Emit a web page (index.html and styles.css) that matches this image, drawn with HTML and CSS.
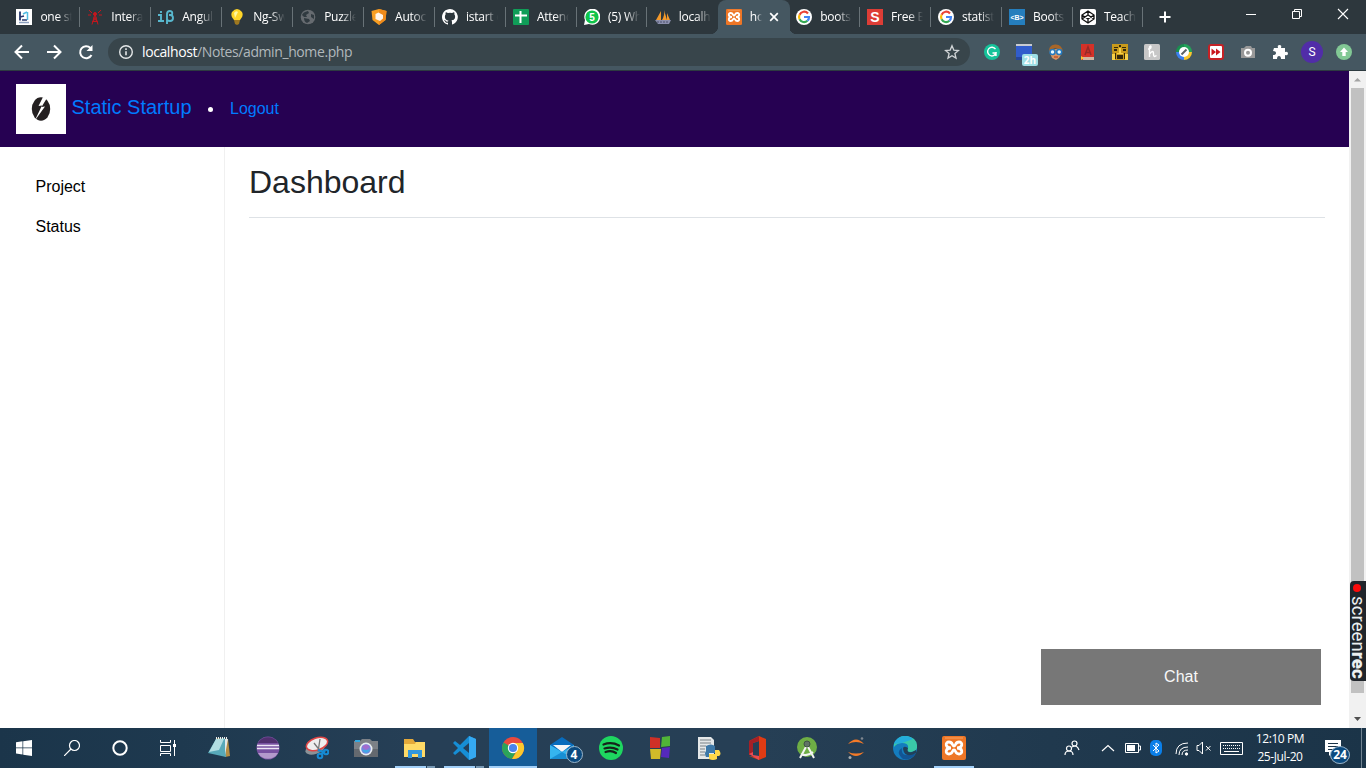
FILE: index.html
```html
<!DOCTYPE html>
<html lang="en">
<head>
<meta charset="utf-8">
<title>home</title>
<link rel="stylesheet" href="styles.css">
</head>
<body>
<svg class="defs" width="0" height="0">
  <defs>
    <symbol id="google" viewBox="0 0 16 16"><circle cx="8" cy="8" r="8" fill="#fff"/><g fill="none" stroke-width="2.2"><path d="M12 4.5A5 5 0 0 0 3.6 5.7" stroke="#ea4335"/><path d="M3.6 5.7A5 5 0 0 0 3.6 10.3" stroke="#fbbc05"/><path d="M3.6 10.3A5 5 0 0 0 11.4 11.8" stroke="#34a853"/><path d="M11.4 11.8A5 5 0 0 0 13 8H8" stroke="#4285f4"/></g></symbol>
    <symbol id="xampp" viewBox="0 0 24 24"><rect width="24" height="24" rx="2" fill="#ee7626"/><path d="M3 2h18" stroke="#f6a365"/><path d="M9 12C3 12 3 6 7 6c4 0 3 4 5 4s1-4 5-4 4 6-2 6c6 0 6 6 2 6s-3-4-5-4-1 4-5 4-4-6 2-6z" fill="none" stroke="#fff" stroke-width="2.8"/></symbol>
  </defs>
</svg>

<div class="screen">
  <div class="tabstrip">
    <div class="tabs">
      <div class="tab"><svg viewBox="0 0 16 16"><path fill="#fff" d="M0 0h16v16H0z"/><path d="M4 2.500v9M4 8l4-1" stroke="#26376d" stroke-width="1.800" fill="none"/><path d="M6 11h5" stroke="#26376d" stroke-width="1.500"/><path d="M7 5l4-2M11.500 3v8" stroke="#51bde2" stroke-width="1.500" fill="none"/><path d="M3 13.500h10" stroke="#8ca0bf" stroke-width="1.500"/></svg><span class="title">one st</span></div>
      <div class="tab"><svg viewBox="0 0 16 16" fill="none" stroke="#c5161d"><path d="M8 5l-3 10.500M8 5l3 10.500M6.500 9h3M5.500 12.500h5M6.500 9l4 3.500M9.500 9l-4 3.500"/><path d="M5 4L2 1M4 6H1M11 4l3-3M12 6h3"/><circle cx="8" cy="5" r="1.500" fill="#c5161d"/></svg><span class="title">Intera</span></div>
      <div class="tab"><svg viewBox="0 0 16 16" fill="none" stroke="#58b8ce" stroke-width="1.900"><path d="M0 6h3v6M0 12h6M3 2v2M9 15V5q0-3 3-3t2 4h-3 1q3 0 3 3t-3 3q-3 0-3-2"/></svg><span class="title">Angul</span></div>
      <div class="tab"><svg viewBox="0 0 16 16"><path d="M5 11Q1 7 3 3q5-6 10 0 2 4-2 8z" fill="#ffd629"/><path d="M5 4q2-3 4-1L6 9z" fill="#fff8a0"/><path d="M5 11h6l-1 4-2 1-2-1z" fill="#9e7820"/></svg><span class="title">Ng-Sw</span></div>
      <div class="tab"><svg viewBox="0 0 16 16"><circle cx="8" cy="8" r="7.300" fill="#666b70"/><path d="M8 2l1 2-3 2 1 2H4L2 6q1-3 6-4zM4 9l5 1 1 2-3 2q-3-1-3-5zM11 5l3 1v4l-3-2z" fill="#303a40"/></svg><span class="title">Puzzle</span></div>
      <div class="tab"><svg viewBox="0 0 16 16"><path d="M.5 2L8 0l7.500 2-1 9L8 16l-6.500-5z" fill="#f89e21"/><path d="M8 0l7.500 2-1 9L8 16z" fill="#ef8b1b"/><path d="M4.500 5l3-1.500L12 6v3.500L9 12l-4.500-2z" fill="#fff4e8"/></svg><span class="title">Autoc</span></div>
      <div class="tab"><svg viewBox="0 0 16 16"><path fill="#fff" d="M8 0C3.6 0 0 3.6 0 8c0 3.5 2.3 6.500 5.500 7.600.4.100.5-.2.5-.4v-1.500c-2.200.5-2.700-1-2.700-1-.4-.9-.9-1.200-.9-1.200-.7-.5.100-.5.100-.5.8.100 1.200.8 1.200.8.7 1.200 1.900.9 2.300.7.100-.5.3-.9.5-1.100-1.800-.2-3.600-.9-3.600-4 0-.9.300-1.600.8-2.100-.100-.2-.4-1 .1-2.100 0 0 .7-.2 2.200.8a7.600 7.600 0 0 1 4 0c1.500-1 2.200-.8 2.200-.8.4 1.100.2 1.900.1 2.100.5.600.8 1.300.8 2.200 0 3.100-1.900 3.700-3.700 3.900.3.300.6.800.6 1.500v2.200c0 .2.100.5.600.4A8 8 0 0 0 8 0z"/></svg><span class="title">istart o</span></div>
      <div class="tab"><svg viewBox="0 0 16 16"><rect width="16" height="16" rx="1" fill="#109d58"/><path d="M2 6.500h12M7.500 2v12" stroke="#fff" stroke-width="2"/></svg><span class="title">Attend</span></div>
      <div class="tab"><svg viewBox="0 0 16 16"><path d="M0 16l1-5A8 8 0 1 1 5 15z" fill="#fff"/><circle cx="8" cy="8" r="6.600" fill="#10c44b"/><text x="8" y="11.800" class="glyph-five">5</text></svg><span class="title">(5) Wh</span></div>
      <div class="tab"><svg viewBox="0 0 16 16"><path d="M1 11L6 2v9zM7 11q3-5 2-10l3 10zM12 11V4l3 7z" fill="#f3992b"/><path d="M0 11h16l-2 4H3z" fill="#8b8fac"/><path d="M2 13h12" stroke="#4b506d" stroke-dasharray="2 1"/></svg><span class="title">localh</span></div>
      <div class="tab active"><svg><use href="#xampp"/></svg><span class="title">ho</span><svg class="close" viewBox="0 0 10 10"><path d="M1.200 1.200l7.600 7.600M8.800 1.200L1.200 8.800" stroke="#fff" stroke-width="1.700"/></svg></div>
      <div class="tab"><svg><use href="#google"/></svg><span class="title">boots</span></div>
      <div class="tab"><svg viewBox="0 0 16 16"><path fill="#dd3d36" d="M0 0h16v16H0z"/><text x="8" y="13" class="glyph-s">S</text></svg><span class="title">Free B</span></div>
      <div class="tab"><svg><use href="#google"/></svg><span class="title">statist</span></div>
      <div class="tab"><svg viewBox="0 0 16 16"><path fill="#257ebd" d="M0 0h16v16H0z"/><text x="8" y="10.500" class="glyph-b">&lt;B&gt;</text></svg><span class="title">Boots</span></div>
      <div class="tab"><svg viewBox="0 0 16 16"><rect width="16" height="16" rx="2" fill="#fff"/><path d="M8 2l6 4v4l-6 4-6-4V6zM2 6l6 4 6-4M2 10l6-4 6 4M8 2v4M8 10v4" fill="none" stroke="#111" stroke-width="1.300"/></svg><span class="title">Teach</span></div>
    </div>
    <svg class="newtab" viewBox="0 0 12 12"><path d="M6 .5v11M.5 6h11" stroke="#fff" stroke-width="2"/></svg>
    <div class="window-controls">
      <svg viewBox="0 0 12 12"><path d="M1 6.500h10" stroke="#fff"/></svg>
      <svg viewBox="0 0 12 12" fill="none" stroke="#fff"><path d="M1.500 3.500h7v7h-7zM3.500 3V1.500h7v7H9"/></svg>
      <svg viewBox="0 0 12 12"><path d="M1 1l10 10M11 1L1 11" stroke="#fff" stroke-width="1.100"/></svg>
    </div>
  </div>

  <div class="toolbar">
    <div class="nav">
      <svg viewBox="0 0 16 16"><path d="M15 8H2M8 1.500L1.500 8 8 14.500"/></svg>
      <svg viewBox="0 0 16 16"><path d="M1 8h13M8 1.500L14.500 8 8 14.500"/></svg>
      <svg viewBox="0 0 16 16"><path d="M13.500 11A6 6 0 1 1 12.400 4"/><path d="M14.500 1v6h-6z" class="solid"/></svg>
    </div>
    <div class="omnibox">
      <svg class="info" viewBox="0 0 16 16"><circle cx="8" cy="8" r="6.300" fill="none" stroke="#e4e7e8" stroke-width="1.400"/><path d="M8 7.200v4M8 4.300v1.600" stroke="#e4e7e8" stroke-width="1.600"/></svg>
      <span class="url"><b>localhost</b>/Notes/admin_home.php</span>
      <svg class="star" viewBox="0 0 16 16"><path d="M8 1.800l1.800 4.300 4.700.4-3.600 3 1.100 4.600L8 11.700l-4 2.400 1.100-4.600-3.600-3 4.700-.4z" fill="none" stroke="#d0d4d6" stroke-width="1.300"/></svg>
    </div>
    <div class="extensions">
      <svg viewBox="0 0 16 16"><circle cx="8" cy="8" r="8" fill="#15c39a"/><path d="M11.500 5.200A4.300 4.300 0 1 0 12 9H8.500M12 8v4" fill="none" stroke="#fff" stroke-width="1.400"/></svg>
      <div class="ext"><svg viewBox="0 0 16 16"><path d="M0 1h16v15H0z" fill="#315dcc"/><path d="M0 0h16v2H0z" fill="#c8cbd0"/><path d="M0 13h16v3H0z" fill="#274799"/></svg><span class="timer">2h</span></div>
      <svg viewBox="0 0 16 16"><path d="M2.500 6L13 4l1 5-3 5-3 2-4-2-2-5z" fill="#d79463"/><path d="M1 9Q0 1 7 .5q7-.5 8 7.500l-2-3-6-1-4 2z" fill="#a86628"/><circle cx="4.500" cy="8" r="2.500" fill="#e9faff" stroke="#237ac0" stroke-width="1.500"/><circle cx="11.200" cy="8" r="2.500" fill="#e9faff" stroke="#237ac0" stroke-width="1.500"/><path d="M6 13h4" stroke="#bd4e28" stroke-width="1.300"/></svg>
      <svg viewBox="0 0 16 16"><path d="M1 0h13v13L12 16H1z" fill="#d53128"/><path d="M2 13h12v3H3z" fill="#d0b5a2"/><path d="M5 11l3-8 3 8M6 8.500h4" fill="none" stroke="#962a28" stroke-width="1.500"/><path d="M1 12l3 2-3 2z" fill="#ffc52d"/></svg>
      <svg viewBox="0 0 16 16"><path d="M0 0h16v6l-1 10H1L0 6z" fill="#c99a1b"/><path d="M2 3h4v1H2zM10 3h4v1h-4zM2 5h3v2H2zM11 5h3v2h-3zM5 11h6v4H5zM3 9h1v6H3zM12 9h1v6h-1zM7 1h2v2H7z" fill="#32280c"/><path d="M7 4h2v5H7zM0 10h3v6H0zM13 10h3v6h-3zM5 9h6v1H5z" fill="#f7d047"/></svg>
      <svg viewBox="0 0 16 16"><rect width="16" height="16" rx="1.500" fill="#c7c7c7"/><path d="M4 5q3 0 3-2t-1.500 0V13M5.500 10q4-5 4 0 0 4 3 1.500" fill="none" stroke="#fff" stroke-width="1.400"/></svg>
      <svg viewBox="0 0 16 16"><path d="M8 0a8 8 0 0 1 8 8H8z" fill="#24a35a"/><path d="M0 8a8 8 0 0 1 8-8v8z" fill="#198f4f"/><path d="M0 8h8v8a8 8 0 0 1-8-8z" fill="#3b80ee"/><path d="M16 8a8 8 0 0 1-8 8V8z" fill="#f7c72c"/><circle cx="8" cy="8" r="5" fill="#fff"/><path d="M5.500 10.500l5-5" stroke="#5b6265" stroke-width="2"/></svg>
      <svg viewBox="0 0 16 16"><rect x="1" y="1" width="14" height="14" rx="2" fill="#fff" stroke="#c52125" stroke-width="2"/><path d="M3.500 4.500L8 8l-4.500 3.500zM8 4.500L12.500 8 8 11.500z" fill="#ca171d"/></svg>
      <svg viewBox="0 0 16 16"><path d="M1 4h3l2-2h5l1 2h3v10H1z" fill="#999"/><circle cx="8" cy="8.700" r="3" fill="none" stroke="#fff" stroke-width="2"/></svg>
      <svg viewBox="0 0 16 16"><path d="M2 4h4q-1-3 1.500-3T9 4h4v4q3-1 3 1.500T13 11v4H9q0-3-2-3t-2 3H1v-4q3 0 3-2T1 7z" fill="#fff"/></svg>
      <span class="avatar">S</span>
      <svg viewBox="0 0 16 16"><circle cx="8" cy="8" r="8" fill="#82c895"/><path d="M8 3.500l4 4.500H9.700v4H6.300V8H4z" fill="#fff"/></svg>
    </div>
  </div>

  <div class="viewport">
    <div class="page">
      <header class="site-header">
        <svg class="logo" viewBox="0 0 50 50"><path fill="#fff" d="M0 0h50v50H0z"/><ellipse cx="25" cy="25" rx="9.200" ry="11.700" fill="#231f20"/><path d="M27 13l-4.500 9 3.500-.500L20 34l-1.500 3L29 22.500l-3.500.5L31 14z" fill="#fff"/></svg>
        <a class="brand">Static Startup</a>
        <i class="bullet"></i>
        <a class="logout">Logout</a>
      </header>
      <div class="content">
        <nav class="sidebar"><a>Project</a><a>Status</a></nav>
        <main><h1>Dashboard</h1></main>
      </div>
      <button class="chat">Chat</button>
    </div>
    <div class="scrollbar">
      <svg viewBox="0 0 17 17"><path d="M5 10.500L8.500 7l3.500 3.500z" fill="#a3a3a3"/></svg>
      <div class="thumb"></div>
      <svg class="down" viewBox="0 0 17 17"><path d="M5 6l3.500 4L12 6z" fill="#505050"/></svg>
      <div class="recorder"><i></i><span>screen<b>rec</b></span></div>
    </div>
  </div>

  <footer class="taskbar">
    <div class="system">
      <div><svg class="small" viewBox="0 0 16 16" fill="#fff"><path d="M0 2.200L6.500 1.300v6.200H0zM7.200 1.200L16 0v7.500H7.200zM0 8.200h6.500v6.300L0 13.600zM7.200 8.200H16V16l-8.800-1.300z"/></svg></div>
      <div><svg class="small" viewBox="0 0 16 16" fill="none" stroke="#fff" stroke-width="1.200"><circle cx="10.500" cy="5.500" r="5"/><path d="M7 9L0 16"/></svg></div>
      <div><svg class="small" viewBox="0 0 16 16"><circle cx="8" cy="8" r="6.700" fill="none" stroke="#fff" stroke-width="2"/></svg></div>
      <div><svg class="small" viewBox="0 0 16 16" fill="none" stroke="#fff"><path d="M.5 0v2.500h10V0M.5 5.500h10v6H.5zM.5 16v-2.500h10V16M14.500 0v16"/><path d="M13 4h3v3h-3z" fill="#fff" stroke="none"/></svg></div>
    </div>
    <div class="apps">
      <div><svg viewBox="0 0 24 24"><path d="M10 2l11 1 2 17-5 1z" fill="#b48d44"/><path d="M9 3l9-1 1 19L1 17z" fill="#57a9b9"/><path d="M9 3h8l-5 11L2 16z" fill="#b2dde2"/><path d="M9 2h12" stroke="#eee" stroke-width="2" stroke-dasharray="1 1"/><path d="M18 3h3l-3 16z" fill="#e2e8e8"/></svg></div>
      <div><svg viewBox="0 0 24 24"><circle cx="12" cy="12" r="11.500" fill="#7751a0"/><path d="M2 7a11.500 11.500 0 0 1 20 0z" fill="#51306f"/><path d="M2 17h20a11.500 11.500 0 0 1-20 0z" fill="#b39acb"/><path d="M1 9.500h22M1 12.500h22" stroke="#eee6f5" stroke-width="1.300"/></svg></div>
      <div><svg viewBox="0 0 24 24"><ellipse cx="10" cy="13" rx="10" ry="5" fill="#8c9297" transform="rotate(-18 10 13)"/><ellipse cx="12" cy="8" rx="11" ry="6" fill="#eee" stroke="#df4545" stroke-width="1.500" transform="rotate(-18 12 8)"/><path d="M9 7l7 9M15 3l-2 13" stroke="#777" stroke-width="1.300"/><g fill="none" stroke="#168bd4" stroke-width="2"><circle cx="15" cy="20" r="2.300"/><circle cx="21" cy="16" r="2.300"/><path d="M13 14l6 2-3 2"/></g></svg></div>
      <div><svg viewBox="0 0 24 24"><path d="M0 5h6l2-2h8l2 2h6v16H0z" fill="#7c8187"/><path d="M1 4h5v2H1z" fill="#32a7df"/><path d="M0 13h24v8H0z" fill="#64696f"/><circle cx="12" cy="13" r="6.500" fill="#e7edf1"/><circle cx="12" cy="13" r="4.800" fill="#7386dc"/><path d="M8 11q4-5 8 0l-4 3z" fill="#a36cce"/><path d="M8 14q4 6 8 0z" fill="#41a8e7"/></svg></div>
      <div class="running split"><svg viewBox="0 0 24 24"><path d="M1 3h9l2 3h10v15H1z" fill="#e4a93a"/><path d="M1 8h11l1-2h9v15H1z" fill="#ffda66"/><path d="M5 14h14v8h-4v-4H9v4H5z" fill="#3297dc"/></svg></div>
      <div class="running split"><svg viewBox="0 0 24 24"><path d="M17 0l7 3v18l-7 3-9-9-5 4-2-2 5-5-5-5 2-2 5 4z" fill="#168ed5"/><path d="M17 7v10l-6-5z" fill="#23405b"/><path d="M17 0l7 3v18l-7 3z" fill="#35a9f2"/></svg></div>
      <div class="running selected"><svg viewBox="0 0 24 24"><circle cx="12" cy="12" r="11" fill="#e9493d"/><path d="M2.500 6.500A11 11 0 0 0 11 23l5-9-4-2z" fill="#2ba45a"/><path d="M12 7h9.800A11 11 0 0 1 11 23l5.500-9z" fill="#fbc82d"/><circle cx="12" cy="12" r="5.200" fill="#fff"/><circle cx="12" cy="12" r="4.100" fill="#4a84ec"/></svg></div>
      <div class="mail"><svg viewBox="0 0 24 24"><path d="M0 9l12-8 12 8v14H0z" fill="#086cbd"/><path d="M3 9h18l-9 7z" fill="#f4f6f8"/><path d="M0 9l12 7 12-7v14H0z" fill="#35b5ef"/><path d="M0 23l12-7 12 7z" fill="#188fd4"/></svg><span class="badge">4</span></div>
      <div><svg viewBox="0 0 24 24"><circle cx="12" cy="12" r="12" fill="#1ed760"/><path d="M4.500 8.500q8-3 15.500 1M5.500 12.500q7-2 13 1M6.500 16q6-2 10.500 1" fill="none" stroke="#15231b" stroke-width="2.200" stroke-linecap="round"/></svg></div>
      <div><svg viewBox="0 0 24 24"><path d="M2 1l10 1v10H2z" fill="#ce3027"/><path d="M14 1l8-1v10l-9 1z" fill="#50b538"/><path d="M2 13h11l-1 10H3z" fill="#d0ba29"/><path d="M14 12l8-1-1 11-8-1z" fill="#5529bb"/></svg></div>
      <div><svg viewBox="0 0 24 24"><path d="M1 1h13l3 3v19H1z" fill="#e5e8e9"/><path d="M3 4h11M3 7h11M3 10h6M3 13h5M3 16h5M3 19h5" stroke="#788187"/><path d="M9 15v-5q5-3 9 0v7h-6v4H9q-2-4 0-6z" fill="#3d78a8"/><path d="M18 14h4q3 4 0 6h-2v3q-4 2-8 0v-5h6z" fill="#ffd849"/></svg></div>
      <div><svg viewBox="0 0 24 24"><path d="M3 5l10-5 7 3v18l-7 3-10-4 10 1V5L7 7v10l-4 2z" fill="#df3b14"/><path d="M3 5l10-5v5L7 7v10l-4 2z" fill="#a52026"/><path d="M3 18l4-2v3l6 1v4z" fill="#e84b53"/></svg></div>
      <div><svg viewBox="0 0 24 24"><circle cx="12" cy="11" r="10" fill="#6eae45"/><path d="M12 9L5 22M12 9l7 13M6 18q6 3 12-2" fill="none" stroke="#f2f4f1" stroke-width="2"/><circle cx="12" cy="8" r="3" fill="#617366" stroke="#3f5246"/></svg></div>
      <div><svg viewBox="0 0 24 24"><path d="M4 8q8-9 16 0-8-4-16 0zM4 16q8 8 16 0-8 3-16 0z" fill="#f37a28"/><circle cx="18" cy="2.500" r="1.300" fill="#808890"/><circle cx="6" cy="21.500" r="1.500" fill="#a5abae"/></svg></div>
      <div><svg viewBox="0 0 24 24"><circle cx="12" cy="12" r="12" fill="#147cbe"/><path d="M1 8Q5-1 14 0q11 2 10 12-1 4-7 4-4 0-2-4 1-5-6-5-5 0-8 4z" fill="#3ac9a8"/><path d="M1 8Q4 0 12 0q5 0 8 3L9 7z" fill="#24addc"/><path d="M9 12q-2 11 14 5-5 8-13 6-8-7-1-11z" fill="#125594"/><path d="M15 12q-2 5 4 4l4-2v3q-11 6-13-4 0-4 5-1z" fill="#21405a"/></svg></div>
      <div class="running"><svg><use href="#xampp"/></svg></div>
    </div>
    <div class="tray">
      <svg class="people" viewBox="0 0 16 16" fill="none" stroke="#fff" stroke-width="1.200"><circle cx="5" cy="8.500" r="2.500"/><path d="M1 15q0-4 4-4t4 4"/><circle cx="10.500" cy="3.500" r="2.500"/><path d="M8 7q5-3 7 3"/></svg>
      <svg class="chevron" viewBox="0 0 14 8"><path d="M1 7l6-5.500L13 7" fill="none" stroke="#fff" stroke-width="1.200"/></svg>
      <svg class="battery" viewBox="0 0 16 10"><path d="M.5.5h13v9H.5zM14 3h1.500v4H14" fill="none" stroke="#fff"/><path d="M2 2h8v6H2z" fill="#fff"/></svg>
      <svg class="bluetooth" viewBox="0 0 12 16"><rect width="12" height="16" rx="5" fill="#0a7fe9"/><path d="M3 5l6 6-3 2V3l3 2-6 6" fill="none" stroke="#fff"/></svg>
      <svg class="wifi" viewBox="0 0 14 14" fill="none" stroke="#fff"><path d="M1 12Q1 1 13 1M4 13q0-8 9-8M7 13q0-5 6-5"/><circle cx="11.500" cy="12" r="1.200" fill="#fff"/></svg>
      <svg class="volume" viewBox="0 0 16 14" fill="none" stroke="#fff"><path d="M1 4.500h2L6.500 1v12L3 9.500H1zM10 5l4.500 4.500M14.500 5L10 9.500"/></svg>
      <svg class="keyboard" viewBox="0 0 23 13" fill="none" stroke="#fff"><path d="M.5.5h22v12H.5z"/><path d="M3 3.500h18M3 6.500h18" stroke-dasharray="1 1"/><path d="M4 9.500h15"/></svg>
      <div class="clock"><span>12:10 PM</span><span>25-Jul-20</span></div>
      <div class="notice"><svg viewBox="0 0 16 16"><path d="M0 0h16v12H8l-4 4v-4H0z" fill="#fff"/><path d="M3 3.500h10M3 6.500h10M3 9.500h6" stroke="#1b3448"/></svg><span class="badge">24</span></div>
    </div>
  </footer>
</div>
</body>
</html>
```
FILE: styles.css
```css
* { box-sizing: border-box; }
body { margin: 0; overflow: hidden; font-family: "Liberation Sans", Arial, sans-serif; }
svg { display: block; flex: none; }
.defs { display: none; }
.screen { width: 1366px; height: 768px; display: flex; flex-direction: column; }

.tabstrip { height: 34px; background: #2d373d; display: flex; align-items: center; flex: none; }
.tabs { display: flex; width: 1143px; padding-left: 9px; height: 34px; }
.tab { flex: none; width: 70.95px; display: flex; align-items: center; gap: 8px; padding-left: 7.4px; background: linear-gradient(#687277, #687277) right center / 1px 20px no-repeat; }
.tab > svg { width: 16px; height: 16px; }
.title { width: 32px; overflow: hidden; white-space: nowrap; color: #fff; font: 500 12px/16px "Open Sans", sans-serif; letter-spacing: -.25px; -webkit-mask-image: linear-gradient(90deg, #000 55%, transparent); mask-image: linear-gradient(90deg, #000 55%, transparent); }
.tab.active { width: 72px; background: #455761; border-radius: 8px 8px 0 0; margin-right: -1.6px; }
.tab:has(+ .active) { background: radial-gradient(circle at 0 0, transparent 8px, #455761 8.5px) right bottom / 8px 8px no-repeat; }
.tab.active + .tab { background: radial-gradient(circle at 100% 0, transparent 8px, #455761 8.5px) left bottom / 8px 8px no-repeat, linear-gradient(#687277, #687277) right center / 1px 20px no-repeat; }
.active .title { width: 12px; }
.tab > .close { width: 10px; height: 10px; margin-left: -1px; }
.newtab { width: 12px; height: 12px; margin-left: 16px; }
.window-controls { margin-left: auto; display: flex; gap: 34px; padding: 0 17px 6px 0; }
.window-controls svg { width: 12px; height: 12px; }

.toolbar { height: 37px; flex: none; background: #455761; border-bottom: 1px solid #2d3b40; display: flex; align-items: center; }
.nav { display: flex; width: 108px; gap: 16px; padding-left: 14px; }
.nav svg { width: 16px; height: 16px; fill: none; stroke: #fff; stroke-width: 2; }
.nav .solid { fill: #fff; stroke: none; }
.omnibox { width: 862px; height: 28px; border-radius: 14px; background: #38454b; display: flex; align-items: center; padding: 0 10px; }
.info { width: 16px; height: 16px; }
.url { font: 14px/18px "Open Sans", sans-serif; margin-left: 8px; color: #b1b8bc; letter-spacing: -.4px; }
.url b { color: #fff; font-weight: 400; }
.star { width: 16px; height: 16px; margin-left: auto; }
.extensions { display: flex; align-items: center; gap: 16px; padding-left: 14px; }
.extensions svg { width: 16px; height: 16px; }
.ext { position: relative; }
.timer { position: absolute; left: 6px; top: 10px; width: 16px; height: 12px; border-radius: 2px; background: #9edfe6; color: #fff; font: bold 10px/12px "Open Sans", sans-serif; text-align: center; }
.avatar { width: 22px; height: 22px; margin: 0 -3px; border-radius: 50%; background: #512da8; color: #fff; text-align: center; font: 12px/22px Roboto, sans-serif; }
.glyph-five, .glyph-s, .glyph-b { font-family: "Liberation Sans", sans-serif; font-weight: bold; fill: #fff; text-anchor: middle; }
.glyph-five { font-size: 10px; }
.glyph-s { font-size: 14px; }
.glyph-b { font-size: 7px; }

.viewport { height: 657px; flex: none; display: flex; background: #fff; }
.page { width: 1349px; position: relative; display: flex; flex-direction: column; }
.site-header { height: 76px; background: #260152; padding-left: 16px; display: flex; align-items: center; flex: none; color: #007bff; }
.logo { width: 50px; height: 50px; }
.brand { width: 119.5px; margin: 0 0 4px 5.5px; font-size: 20px; line-height: 30px; white-space: nowrap; }
.bullet { width: 5px; height: 5px; margin: 1px 17px 0; border-radius: 50%; background: #fff; }
.logout { font-size: 16px; line-height: 24px; }
.content { flex: 1; display: flex; }
.sidebar { width: 225px; padding: 28px 0 0 35.5px; border-right: 1px solid #f0f0f0; display: flex; flex-direction: column; gap: 16px; font-size: 16px; line-height: 24px; color: #000; }
main { flex: 1; padding: 16px 24px; }
h1 { margin: 0; height: 55px; border-bottom: 1px solid #dee2e6; font-size: 32px; line-height: 38px; font-weight: 400; color: #212529; }
.chat { position: absolute; right: 28px; bottom: 23px; width: 280px; height: 56px; border: 0; background: #777; color: #f8f8f8; font: 16px "Liberation Sans", Arial, sans-serif; }
.scrollbar { width: 17px; background: #f1f1f1; display: flex; flex-direction: column; position: relative; }
.scrollbar svg { width: 17px; height: 17px; }
.scrollbar .down { margin-top: auto; }
.thumb { width: 13px; height: 605px; margin-left: 2px; background: #c1c1c1; }
.recorder { position: absolute; left: 1px; top: 510px; width: 16px; height: 100px; border-radius: 4px 0 0 4px; background: #20252b; color: #eceff0; }
.recorder i { display: block; width: 8px; height: 8px; border-radius: 50%; background: #fb0b0b; margin: 3px 0 4px 3px; }
.recorder span { display: block; width: 16px; height: 84px; writing-mode: vertical-rl; font: 400 18.5px/16px Roboto, sans-serif; letter-spacing: .1px; white-space: nowrap; }
.recorder b { font-weight: 900; }

.taskbar { height: 40px; flex: none; display: flex; color: #fff; background: linear-gradient(90deg, #1b354a 0, #1e394f 180px, #263f56 420px, #263f55 760px, #20394e 1050px, #1b3448 1366px); }
.system, .apps { display: flex; }
.system div, .apps div { width: 48px; height: 40px; display: flex; align-items: center; justify-content: center; }
.apps { gap: 1px; margin-left: 2.5px; }
.apps svg { width: 24px; height: 24px; }
.system .small { width: 16px; height: 16px; }
.running { background: linear-gradient(#a1cff8, #a1cff8) center bottom / 40px 2px no-repeat; }
.running.split { background: linear-gradient(90deg, #a1cff8 31px, #263f56 31px 32px, #7798b4 32px) center bottom / 40px 2px no-repeat; }
.running.selected { background: linear-gradient(#a1cff8, #a1cff8) center bottom / 48px 2px no-repeat, #165d99; }
.mail, .notice { position: relative; }
.badge { position: absolute; border: 1px solid #9bb6cb; border-radius: 50%; background: #0b4a7f; color: #fff; text-align: center; font: bold 12px/16px "Open Sans", sans-serif; }
.mail .badge { width: 17px; height: 17px; left: 28px; top: 18px; line-height: 15px; }
.tray { margin-left: auto; width: 302px; display: flex; align-items: center; border-right: 1px solid #718391; margin-right: 4px; }
.people { width: 16px; height: 16px; margin-left: 4px; }
.chevron { width: 14px; height: 8px; margin-left: 21px; }
.battery { width: 16px; height: 10px; margin-left: 10px; }
.bluetooth { width: 12px; height: 16px; margin-left: 9px; }
.wifi { width: 14px; height: 14px; margin: 2px 0 0 13px; }
.volume { width: 16px; height: 14px; margin-left: 7px; }
.keyboard { width: 23px; height: 13px; margin-left: 8px; }
.clock { width: 62px; margin-left: 6px; text-align: center; display: flex; flex-direction: column; font: 12px/18px "Open Sans", sans-serif; letter-spacing: -.4px; white-space: nowrap; }
.notice { margin-left: 14px; }
.notice svg { width: 16px; height: 16px; }
.notice .badge { left: 5px; top: 6px; width: 20px; height: 18px; }
```
